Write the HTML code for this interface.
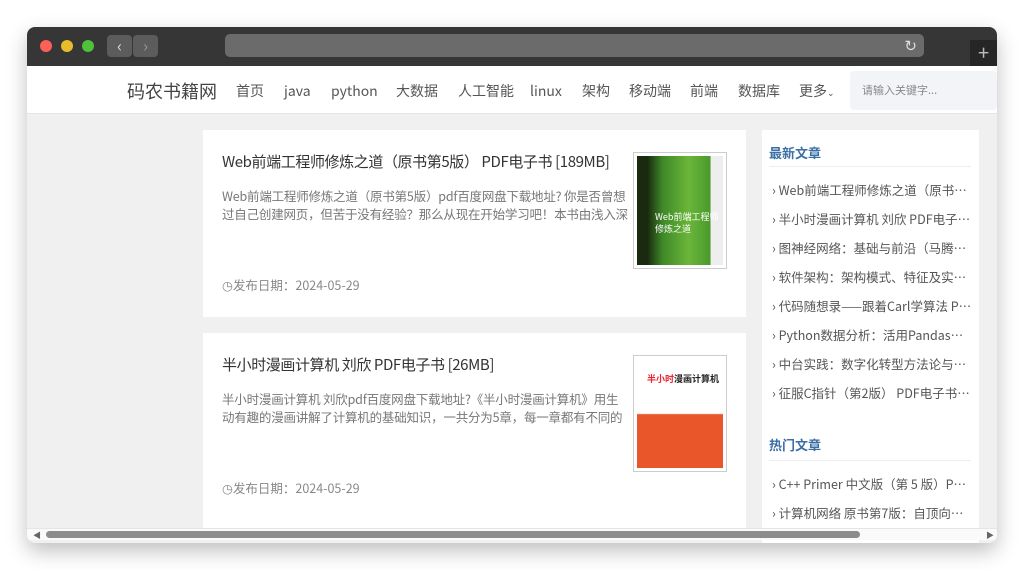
<!DOCTYPE html>
<html><head><meta charset="utf-8"><style>
*{margin:0;padding:0;box-sizing:border-box}
body{width:1024px;height:570px;background:#fff;position:relative;overflow:hidden;font-family:"Noto Sans CJK SC","Liberation Sans",sans-serif}
.win{position:absolute;left:27px;top:27px;width:970px;height:516px;border-radius:8px;overflow:hidden;box-shadow:0 8px 20px rgba(0,0,0,.25);background:#f0f0f0}
.tb{position:absolute;left:0;top:0;width:970px;height:39px;background:#363636}
.dot{position:absolute;top:13px;width:12px;height:12px;border-radius:50%}
.btn{position:absolute;top:8px;width:25px;height:22px;background:#5c5c5c;border-radius:4px;color:#ddd;font-size:16px;text-align:center;line-height:20px}
.addr{position:absolute;left:198px;top:7px;width:699px;height:23px;background:#6b6b6b;border-radius:5px}
.nav{position:absolute;left:0;top:39px;width:970px;height:48px;background:#fff;border-bottom:1px solid #e6e6e6}
.nav span{position:absolute;top:15px;font-size:14px;line-height:20px;color:#555}
.card{position:absolute;left:176px;width:543px;background:#fff}
.card h2{position:absolute;left:19px;top:21px;font-size:15px;letter-spacing:-0.4px;line-height:22px;font-weight:normal;color:#333;white-space:nowrap}
.card p{position:absolute;left:19px;top:57px;width:408px;font-size:12.5px;letter-spacing:-0.2px;line-height:18px;color:#777;height:36px;overflow:hidden}
.card .d{position:absolute;left:19px;top:146px;font-size:12.5px;line-height:18px;color:#888}
.card .img{position:absolute;left:430px;top:22px;width:94px;height:117px;border:1px solid #ccc;padding:3px}
.side{position:absolute;left:735px;top:103px;width:217px;height:420px;background:#fff}
.side h3{position:absolute;left:7px;font-size:13px;line-height:18px;color:#3a6ea5;font-weight:bold}
.side .hr{position:absolute;left:7px;width:202px;height:1px;background:#eee}
.side .it{position:absolute;left:10px;width:200px;font-size:12.5px;line-height:18px;color:#555;white-space:nowrap;overflow:hidden;text-overflow:ellipsis}
.sb{position:absolute;left:0;top:501px;width:970px;height:12px;background:#fafafa;border-top:1px solid #e5e5e5}
</style></head><body>
<div class="win">
 <div class="tb">
  <div class="dot" style="left:13px;background:#fe5f57"></div>
  <div class="dot" style="left:34px;background:#e8bc2a"></div>
  <div class="dot" style="left:55px;background:#4fc23a"></div>
  <div class="btn" style="left:80px">‹</div>
  <div class="btn" style="left:106px;color:#999">›</div>
  <div class="addr"><span style="position:absolute;right:7px;top:1px;color:#ddd;font-size:15px">↻</span></div>
  <div style="position:absolute;left:943px;top:13px;width:27px;height:26px;background:#262626;color:#bbb;font-size:20px;text-align:center;line-height:24px">+</div>
 </div>
 <div class="nav">
  <span style="left:100px;top:13px;font-size:18px;line-height:24px;color:#444">码农书籍网</span>
  <span style="left:209px">首页</span><span style="left:257px">java</span><span style="left:304px">python</span><span style="left:369px">大数据</span><span style="left:431px">人工智能</span><span style="left:503px">linux</span><span style="left:555px">架构</span><span style="left:602px">移动端</span><span style="left:663px">前端</span><span style="left:711px">数据库</span><span style="left:772px">更多<small style="font-size:9px">⌄</small></span>
  <div style="position:absolute;left:823px;top:5px;width:147px;height:39px;background:#f3f4f7;border-radius:4px;font-size:11px;line-height:14px;color:#888;padding:12px 0 0 12px">请输入关键字...</div>
 </div>
 <div class="card" style="top:103px;height:187px">
  <h2>Web前端工程师修炼之道（原书第5版） PDF电子书 [189MB]</h2>
  <p>Web前端工程师修炼之道（原书第5版）pdf百度网盘下载地址? 你是否曾想过自己创建网页，但苦于没有经验？那么从现在开始学习吧！本书由浅入深地...</p>
  <div class="d">◷发布日期：2024-05-29</div>
  <div class="img"><div style="width:100%;height:100%;background:linear-gradient(90deg,#1a2a10 0 12%,#3f8a28 30%,#6bb53a 60%,#4a9a2c 85%,#eee 86%);color:#fff;font-size:9px;line-height:12px;padding:55px 0 0 18px">Web前端工程师<br>修炼之道</div></div>
 </div>
 <div class="card" style="top:306px;height:200px">
  <h2>半小时漫画计算机 刘欣 PDF电子书 [26MB]</h2>
  <p>半小时漫画计算机 刘欣pdf百度网盘下载地址?《半小时漫画计算机》用生动有趣的漫画讲解了计算机的基础知识，一共分为5章，每一章都有不同的风景...</p>
  <div class="d">◷发布日期：2024-05-29</div>
  <div class="img"><div style="width:100%;height:100%;background:linear-gradient(180deg,#fff 0 50%,#e8562a 51%);color:#e23;font-size:9px;line-height:12px;font-weight:bold;padding:14px 0 0 10px">半小时<span style="color:#222">漫画计算机</span></div></div>
 </div>
 <div class="side">
  <h3 style="top:14px">最新文章</h3><div class="hr" style="top:36px"></div>
  <div class="it" style="top:51px">› Web前端工程师修炼之道（原书第5版）</div>
  <div class="it" style="top:80px">› 半小时漫画计算机 刘欣 PDF电子书 [26MB]</div>
  <div class="it" style="top:109px">› 图神经网络：基础与前沿（马腾飞）</div>
  <div class="it" style="top:138px">› 软件架构：架构模式、特征及实践指南</div>
  <div class="it" style="top:167px">› 代码随想录——跟着Carl学算法 PDF</div>
  <div class="it" style="top:196px">› Python数据分析：活用Pandas库 PDF</div>
  <div class="it" style="top:225px">› 中台实践：数字化转型方法论与解决方案</div>
  <div class="it" style="top:254px">› 征服C指针（第2版） PDF电子书 [15MB]</div>
  <h3 style="top:306px">热门文章</h3><div class="hr" style="top:330px"></div>
  <div class="it" style="top:345px">› C++ Primer 中文版（第 5 版）PDF电子书</div>
  <div class="it" style="top:374px">› 计算机网络 原书第7版：自顶向下方法</div>
 </div>
 <div class="sb"><div style="position:absolute;left:19px;top:2px;width:814px;height:7px;background:#8c8c8c;border-radius:4px"></div>
 <div style="position:absolute;left:6px;top:1px;font-size:8px;color:#666">◀</div><div style="position:absolute;right:3px;top:1px;font-size:8px;color:#666">▶</div></div>
</div>
</body></html>
